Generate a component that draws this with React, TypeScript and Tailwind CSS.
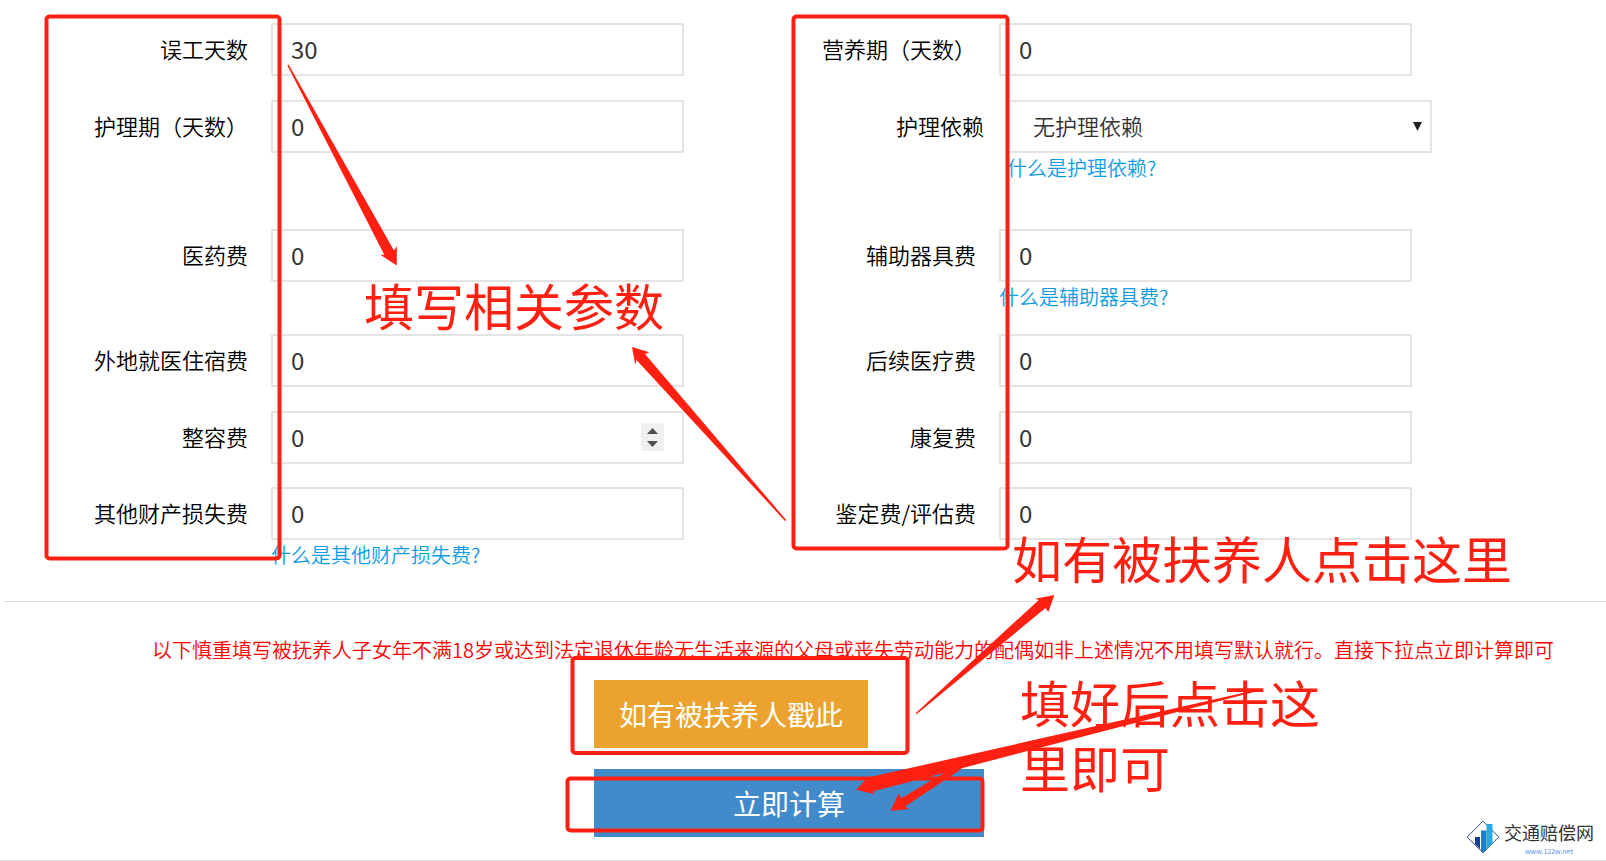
import { useState } from 'react';

interface FieldProps {
  id: string;
  label: string;
  initial?: string;
  help?: string;
  spinner?: boolean;
}

const SpinButtons = ({ onStep }: { onStep: (delta: number) => void }) => (
  <span className="absolute right-5 top-3 flex h-7 w-[23px] flex-col bg-[#f0f0f0]">
    <button type="button" aria-label="增加" onClick={() => onStep(1)} className="flex h-3.5 items-end justify-center pb-[3px]">
      <svg width="11" height="6" viewBox="0 0 11 6" fill="#505050"><path d="M0 6L5.5 0L11 6Z" /></svg>
    </button>
    <button type="button" aria-label="减少" onClick={() => onStep(-1)} className="flex h-3.5 items-start justify-center pt-1">
      <svg width="11" height="6" viewBox="0 0 11 6" fill="#505050"><path d="M0 0L5.5 6L11 0Z" /></svg>
    </button>
  </span>
);

const HelpLink = ({ children }: { children: string }) => (
  <a href="#help" className="block text-xl leading-[30px] text-[#0c9ce4]">{children}</a>
);

const Field = ({ id, label, initial = '0', help, spinner }: FieldProps) => {
  const [value, setValue] = useState(initial);

  return (
    <div className="flex">
      <label htmlFor={id} className="mr-[23px] w-[184px] shrink-0 text-right text-[22px] leading-[51px] text-black">
        {label}
      </label>
      <div className="w-[413px]">
        <div className="relative">
          <input
            id={id}
            type="text"
            inputMode="numeric"
            value={value}
            onChange={(e) => setValue(e.target.value)}
            className="block h-[53px] w-full border-2 border-[#e4e4e4] bg-white px-[18px] pb-[3px] text-2xl font-normal text-[#333]"
          />
          {spinner && <SpinButtons onStep={(delta) => setValue(String(Number(value) + delta))} />}
        </div>
        {help && <HelpLink>{help}</HelpLink>}
      </div>
    </div>
  );
};

const DependencyField = () => (
  <div className="flex pl-2">
    <label htmlFor="nursing-dependency" className="mr-[23px] w-[184px] shrink-0 text-right text-[22px] leading-[51px] text-black">
      护理依赖
    </label>
    <div className="w-[425px] shrink-0">
      <div className="relative">
        <select
          id="nursing-dependency"
          className="block h-[53px] w-full appearance-none border-2 border-[#e4e4e4] bg-white px-6 pb-[2px] text-[22px] text-[#333]"
        >
          <option>无护理依赖</option>
          <option>部分护理依赖</option>
          <option>完全护理依赖</option>
        </select>
        <svg className="pointer-events-none absolute right-2.5 top-[22px]" width="9" height="9" viewBox="0 0 9 9" fill="#222">
          <path d="M0 0H9L4.5 9Z" />
        </svg>
      </div>
      <HelpLink>什么是护理依赖?</HelpLink>
    </div>
  </div>
);

// Hand-drawn style marks that lie over the form
const Annotations = () => (
  <div className="pointer-events-none absolute left-0 top-0 h-[861px] w-[1606px] text-[50px] font-normal leading-[65px] text-[#ff2012]">
    <svg className="absolute left-0 top-0" width="1606" height="861" viewBox="0 0 1606 861" fill="none">
      <g stroke="#ff2012" strokeWidth="4">
        <rect x="46.5" y="16.5" width="233" height="542" rx="3" />
        <rect x="793.5" y="16.5" width="214" height="532" rx="3" />
        <rect x="572.5" y="658" width="335" height="95" rx="3" />
        <rect x="567.5" y="778.5" width="415" height="52" rx="3" />
      </g>
      <g fill="#ff2012">
        <path d="M287.3 65.2L288.7 64.8L394 250.5L396.8 246L396.8 265.5L380 254.5L384.4 255Z" />
        <path d="M786.2 520L785 521L636.5 360L635.3 364.7L632 347L649.3 352.3L645 354Z" />
        <path d="M915.6 713.2L1038.8 600L1035 598.7L1054.4 595L1048.3 612L1045.5 608L916.5 714.2Z" />
        <path d="M1256 690L868 777.5L856 789.7L875.4 794.3L872.5 791.5L1256 691.5Z" />
        <path d="M978 752.7L901 798.5L898.8 793.3L890.5 810.7L909 809L905 806.5L957 772L979.5 754Z" />
      </g>
    </svg>
    <p className="absolute left-[364px] top-[272px] whitespace-nowrap">填写相关参数</p>
    <p className="absolute left-[1012px] top-[525px] whitespace-nowrap">如有被扶养人点击这里</p>
    <p className="absolute left-[1020px] top-[669px] w-[310px]">填好后点击这里即可</p>
  </div>
);

const SiteLogo = () => (
  <a href="#home" className="absolute bottom-1 right-3 flex items-center gap-1">
    <svg width="34" height="34" viewBox="0 0 34 34" fill="none">
      <path d="M17 1.2L32.8 17L17 32.8L1.2 17Z" stroke="#34488c" />
      <path d="M9 17H14V29L9 24Z" fill="#123f94" />
      <path d="M15 10.5H20.5V29.5L17 33L15 31Z" fill="#1c80c6" />
      <path d="M20.5 4H26.5V23L20.5 29Z" fill="#29a9e1" />
    </svg>
    <span className="flex flex-col items-center font-normal">
      <span className="text-lg leading-7 text-[#333]">交通赔偿网</span>
      <span className="text-[7px] leading-2.5 text-[#5b8def]">www.122w.net</span>
    </span>
  </a>
);

export default function App() {
  return (
    <main className="relative min-h-screen overflow-hidden border-b border-[#ddd] bg-white font-['Noto_Sans_CJK_SC',sans-serif] font-[350]">
      <form onSubmit={(e) => e.preventDefault()}>
        <div className="grid grid-cols-[728px_1fr] pl-16 pt-[23px]">
          <div className="flex flex-col gap-6">
            <Field id="lost-days" label="误工天数" initial="30" />
            <div className="h-[105px]">
              <Field id="nursing-days" label="护理期（天数）" />
            </div>
            <div className="h-[81px]">
              <Field id="medical" label="医药费" />
            </div>
            <Field id="lodging" label="外地就医住宿费" />
            <div className="h-[52px]">
              <Field id="cosmetic" label="整容费" spinner />
            </div>
            <Field id="property" label="其他财产损失费" help="什么是其他财产损失费?" />
          </div>
          <div className="flex flex-col gap-6">
            <Field id="nutrition-days" label="营养期（天数）" />
            <div className="h-[105px]">
              <DependencyField />
            </div>
            <div className="h-[81px]">
              <Field id="aids" label="辅助器具费" help="什么是辅助器具费?" />
            </div>
            <Field id="followup" label="后续医疗费" />
            <div className="h-[52px]">
              <Field id="rehab" label="康复费" />
            </div>
            <Field id="appraisal" label="鉴定费/评估费" />
          </div>
        </div>

        <hr className="ml-1 mt-[31px] border-[#ddd]" />

        <p className="mt-8 whitespace-nowrap pl-[100px] text-center text-xl leading-8 text-[#ff0000]">
          以下慎重填写被抚养人子女年不满18岁或达到法定退休年龄无生活来源的父母或丧失劳动能力的配偶如非上述情况不用填写默认就行。直接下拉点立即计算即可
        </p>

        <div className="ml-[594px] mt-[14px] flex w-[390px] flex-col items-start gap-[21px] text-[28px] font-normal leading-[68px] text-white">
          <button type="button" className="h-[68px] bg-[#eba22f] px-[25px]">如有被扶养人戳此</button>
          <button type="submit" className="h-[68px] w-full bg-[#428bca]">立即计算</button>
        </div>
      </form>

      <Annotations />
      <SiteLogo />
    </main>
  );
}
